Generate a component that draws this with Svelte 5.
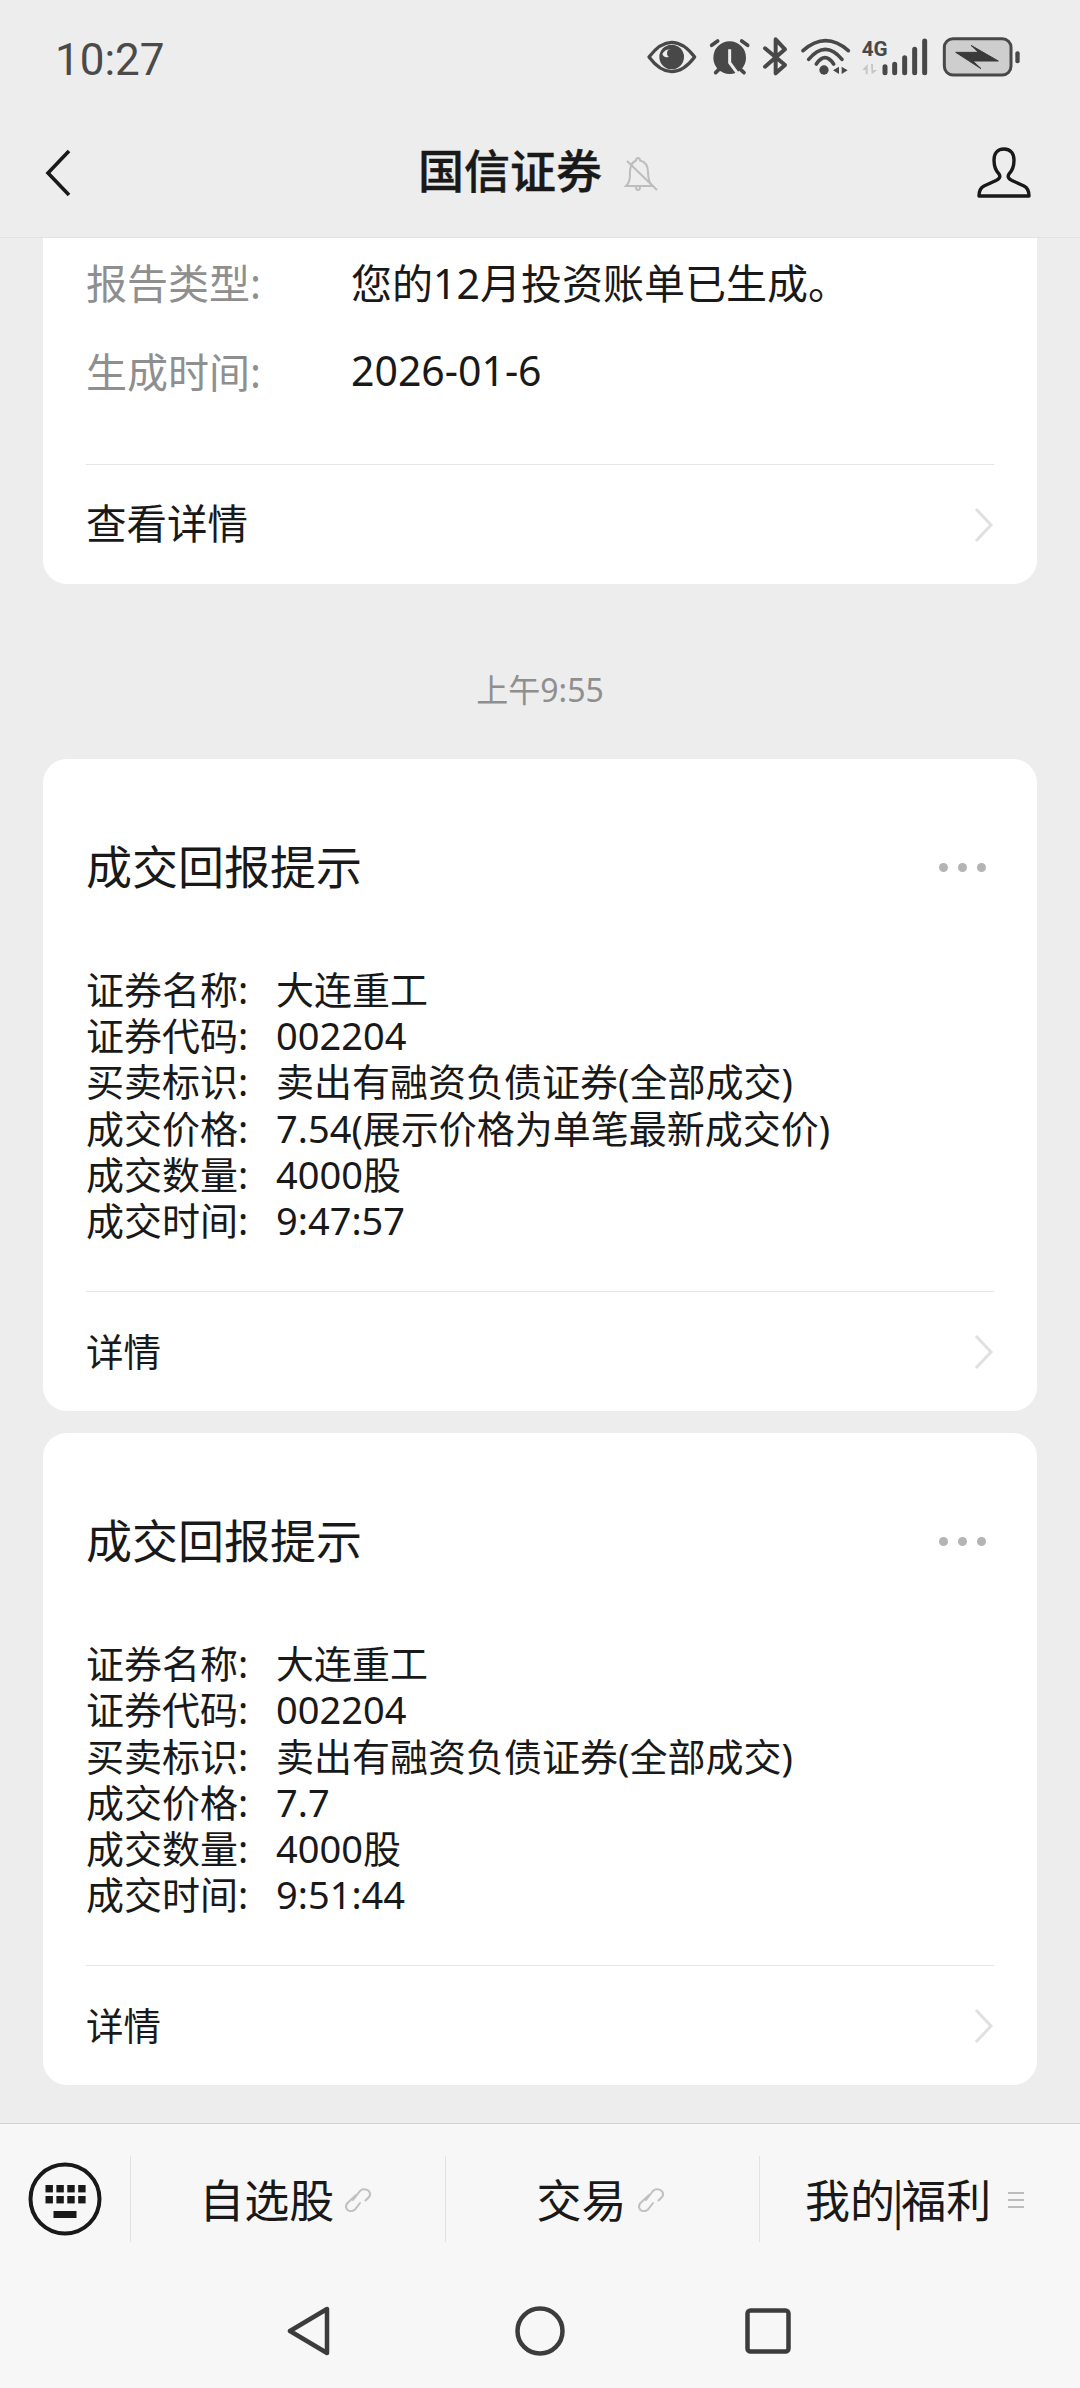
<script>
  const cards = [
    {
      rows: [
        ['证券名称', '大连重工'],
        ['证券代码', '002204'],
        ['买卖标识', '卖出有融资负债证券(全部成交)'],
        ['成交价格', '7.54(展示价格为单笔最新成交价)'],
        ['成交数量', '4000股'],
        ['成交时间', '9:47:57']
      ]
    },
    {
      rows: [
        ['证券名称', '大连重工'],
        ['证券代码', '002204'],
        ['买卖标识', '卖出有融资负债证券(全部成交)'],
        ['成交价格', '7.7'],
        ['成交数量', '4000股'],
        ['成交时间', '9:51:44']
      ]
    }
  ];
</script>

{#snippet chevron()}
  <svg class="chevron" width="20" height="36" viewBox="0 0 20 36">
    <path d="M2 2 L17 18 L2 34" fill="none" stroke="#e0e0e0" stroke-width="3" />
  </svg>
{/snippet}

{#snippet link()}
  <svg class="tab-icon" width="26" height="24" viewBox="0 0 26 24" fill="none" stroke="#c0c0c0" stroke-width="2" stroke-linecap="round">
    <path d="M8 12 L15 3 C17 0.8 21 0.8 23.5 2.8 C25.5 4.8 25.5 7 24 9 L20.5 12.5" />
    <path d="M11 7 L2.5 15 C0.8 17 0.8 20 2.5 22 C5 23.6 8 23.3 10 21.5 L15 15" />
  </svg>
{/snippet}

<div class="phone">
  <header class="top">
    <div class="status">
      <span class="time">10:27</span>
      <svg class="status-icons" width="480" height="100" viewBox="0 0 1440 300">
        <g fill="none" stroke="#484848" stroke-width="10" stroke-linecap="round" stroke-linejoin="round">
          <!-- eye -->
          <path d="M150 141 C175 108 196 97 218 97 C240 97 262 108 287 141 C262 174 240 185 218 185 C196 185 175 174 150 141 Z" />
          <!-- alarm ears and feet -->
          <path d="M338 106 L356 93 M446 106 L428 93 M350 188 L362 176 M435 188 L422 176" stroke-width="11" />
          <!-- bluetooth -->
          <path d="M498 115 L558 165 L530 190 V88 L558 118 L498 170" stroke-width="12" />
          <!-- wifi -->
          <path d="M612 122 Q680 62 748 122 M629 148 Q679 88 729 148 M652 162 Q678 124 704 162" stroke-width="11" />
          <!-- signal -->
          <path d="M858 170 V188 M887 163 V188 M917 143 V188 M947 118 V188 M977 93 V188" stroke-width="15" />
        </g>
        <circle cx="218" cy="141" r="37" fill="#484848" />
        <path d="M190 132 C196 147 214 146 222 122 C208 114 196 120 190 132 Z" fill="#ededed" />
        <circle cx="216" cy="130" r="12" fill="#484848" />
        <circle cx="392" cy="143" r="49" fill="#484848" />
        <path d="M392 118 V158 L414 188" fill="none" stroke="#ededed" stroke-width="9" />
        <circle cx="675" cy="180" r="14" fill="#484848" />
        <path d="M702 181 L720 170 V192 Z M728 170 L746 181 L728 192 Z" fill="#484848" />
        <text x="788" y="137" class="net">4G</text>
        <path d="M790 180 L806 162 V193 H800 V180 Z M816 162 H822 V180 H835 L818 193 Z" fill="#c6c6c6" />
        <!-- battery -->
        <rect x="1036" y="86" width="200" height="109" rx="26" fill="#cecece" stroke="#484848" stroke-width="9" />
        <rect x="1249" y="124" width="13" height="36" rx="6" fill="#484848" />
        <path d="M1070 127 H1138 L1116 106 L1198 153 H1122 L1146 176 Z" fill="#3a3a3a" stroke="#3a3a3a" stroke-width="3" stroke-linejoin="round" />
      </svg>
    </div>
    <nav class="bar">
      <svg class="back" width="26" height="48" viewBox="0 0 26 48">
        <path d="M24 2 L3 24 L24 46" fill="none" stroke="#191919" stroke-width="3.6" />
      </svg>
      <div class="name">
        <span>国信证券</span>
        <svg width="34" height="38" viewBox="0 0 34 38" fill="none" stroke="#bdbdbd" stroke-width="2">
          <path d="M2 32 C6 28 6 24 6 18 C6 11 9 8 12 6.5 C12 3 16 3 16 6.5 C22 8 24 12 24 18 C24 24 25 28 28 32 Z" />
          <path d="M12 33 C12 37 16 37 16 33" />
          <path d="M3 7 L33 36" />
        </svg>
      </div>
      <svg class="person" width="54" height="52" viewBox="0 0 54 52">
        <path d="M27 2 C20 2 17 7 17 13 C17 20 19 24 22 27 C24 30 22 32 19 33.5 L7 39 C3 41 2 44 2 49 H52 C52 44 51 41 47 39 L35 33.5 C32 32 30 30 32 27 C35 24 37 20 37 13 C37 7 34 2 27 2 Z" fill="none" stroke="#191919" stroke-width="3.4" stroke-linejoin="round" />
      </svg>
    </nav>
  </header>

  <main class="feed">
    <section class="card">
      <div class="report">
        <div class="report-row"><span class="report-key">报告类型:</span><span>您的12月投资账单已生成。</span></div>
        <div class="report-row"><span class="report-key">生成时间:</span><span>2026-01-6</span></div>
      </div>
      <div class="foot big">
        <span>查看详情</span>
        {@render chevron()}
      </div>
    </section>

    <div class="stamp">上午9:55</div>

    {#each cards as card}
      <section class="card trade">
        <div class="trade-title">
          <h2>成交回报提示</h2>
          <div class="dots"><i></i><i></i><i></i></div>
        </div>
        <div class="lines">
          {#each card.rows as [key, value]}
            <div class="line"><span class="line-key">{key}:</span><span>{value}</span></div>
          {/each}
        </div>
        <div class="foot">
          <span>详情</span>
          {@render chevron()}
        </div>
      </section>
    {/each}
  </main>

  <footer class="bottom">
    <div class="tabs">
      <div class="kbd">
        <svg width="74" height="74" viewBox="0 0 74 74">
          <circle cx="37" cy="37" r="34.5" fill="none" stroke="#191919" stroke-width="4" />
          <g fill="#191919">
            {#each [0, 1, 2, 3] as col}
              <rect x={17.5 + col * 10.9} y="23" width="7.4" height="7.4" />
              <rect x={17.5 + col * 10.9} y="34" width="7.4" height="7.4" />
            {/each}
            <rect x="25.5" y="49" width="23" height="7" />
          </g>
        </svg>
      </div>
      <div class="tab">自选股{@render link()}</div>
      <div class="tab">交易{@render link()}</div>
      <div class="tab"><span>我的<span class="pipe">|</span>福利</span><span class="menu"><i></i><i></i><i></i></span></div>
    </div>
    <div class="sysnav">
      <svg width="44" height="50" viewBox="0 0 44 50">
        <path d="M40 3 V47 L3 25 Z" fill="none" stroke="#3c3c3c" stroke-width="4.5" stroke-linejoin="round" />
      </svg>
      <svg width="50" height="50" viewBox="0 0 50 50">
        <circle cx="25" cy="25" r="22.5" fill="none" stroke="#3c3c3c" stroke-width="4.5" />
      </svg>
      <svg width="46" height="46" viewBox="0 0 46 46">
        <rect x="2.5" y="2.5" width="41" height="41" rx="3" fill="none" stroke="#3c3c3c" stroke-width="4.5" />
      </svg>
    </div>
  </footer>
</div>

<style>
  :global(body) {
    margin: 0;
    background: #ededed;
  }

  .phone {
    width: 1080px;
    height: 2388px;
    display: flex;
    flex-direction: column;
    overflow: hidden;
    background: #ededed;
    color: #191919;
    font-family: "Noto Sans", "Noto Sans CJK SC", sans-serif;
  }

  .top {
    flex: none;
    height: 238px;
  }

  .status {
    height: 116px;
    display: flex;
    align-items: center;
    justify-content: space-between;
    padding-left: 55px;
  }

  .time {
    font-family: Roboto, sans-serif;
    font-size: 44px;
    color: #4a4a4a;
    padding-top: 3px;
  }

  .net {
    font-family: Roboto, sans-serif;
    font-size: 62px;
    font-weight: 700;
    fill: #484848;
  }

  .status-icons {
    margin-top: 3px;
    margin-right: 1px;
  }

  .bar {
    height: 122px;
    display: flex;
    align-items: center;
    justify-content: space-between;
    padding: 0 49px 8px 45px;
    box-sizing: border-box;
    border-bottom: 1px solid #e2e2e2;
  }

  .name {
    display: flex;
    align-items: center;
    gap: 22px;
    font-size: 46px;
    font-weight: 500;
    margin-left: 28px;
    -webkit-text-stroke: 0.4px #191919;
  }

  .name span {
    padding-bottom: 9px;
  }

  .feed {
    flex: 1;
    min-height: 0;
    padding: 0 43px;
    overflow: hidden;
  }

  .card {
    background: #fff;
    border-radius: 24px;
    padding: 0 43px;
  }

  .card:first-child {
    border-radius: 0 0 24px 24px;
  }

  .report {
    padding: 1px 0 47px;
  }

  .report-row {
    height: 89px;
    box-sizing: border-box;
    padding-bottom: 6px;
    display: flex;
    align-items: center;
    font-size: 41px;
  }

  .report-key {
    width: 265px;
    color: #8f8f8f;
  }

  .foot {
    height: 119px;
    border-top: 1px solid #e5e5e5;
    display: flex;
    align-items: center;
    justify-content: space-between;
    font-size: 37.5px;
  }

  .foot span {
    padding-bottom: 4px;
  }

  .foot.big {
    font-size: 40.5px;
  }

  .foot.big span {
    padding-bottom: 6px;
  }

  .stamp {
    height: 175px;
    padding-top: 85px;
    box-sizing: border-box;
    text-align: center;
    font-size: 32px;
    line-height: 42px;
    color: #8f8f8f;
  }

  .trade {
    padding-top: 78px;
    margin-bottom: 22px;
  }

  .trade-title {
    height: 60px;
    display: flex;
    align-items: center;
    justify-content: space-between;
    margin-bottom: 69px;
  }

  h2 {
    margin: 0;
    padding-bottom: 6px;
    font-size: 46px;
    font-weight: 400;
  }

  .dots {
    display: flex;
    gap: 10px;
    margin-right: 8px;
  }

  .dots i {
    width: 9px;
    height: 9px;
    border-radius: 50%;
    background: #b4b4b4;
  }

  .lines {
    margin-bottom: 48px;
  }

  .line {
    display: flex;
    height: 46.2px;
    line-height: 46.2px;
    font-size: 38px;
    white-space: nowrap;
  }

  .line-key {
    width: 190px;
  }

  .bottom {
    flex: none;
    height: 265px;
    background: #f7f7f7;
    border-top: 1px solid #d2d2d2;
    box-sizing: border-box;
  }

  .tabs {
    height: 86px;
    margin-top: 32px;
    display: flex;
  }

  .kbd {
    width: 130px;
    padding-left: 28px;
    box-sizing: border-box;
    display: flex;
    align-items: center;
  }

  .tab {
    flex: 1;
    display: flex;
    align-items: center;
    justify-content: center;
    gap: 11px;
    padding-right: 5px;
    border-left: 1px solid #e2e2e2;
    font-family: "Noto Sans CJK SC", sans-serif;
    font-size: 45px;
    line-height: 60px;
    white-space: nowrap;
  }

  .tab:last-child {
    gap: 17px;
    padding-right: 11px;
  }

  .pipe {
    margin: 0 -3px;
  }

  .tab-icon {
    margin-top: 2px;
  }

  .menu {
    display: flex;
    flex-direction: column;
    gap: 5px;
    width: 16px;
    margin-top: 2px;
  }

  .menu i {
    height: 2px;
    background: #bcbcbc;
  }

  .sysnav {
    padding-top: 64px;
    padding-left: 287px;
    display: flex;
    align-items: center;
  }

  .sysnav svg:nth-child(2) {
    margin-left: 184px;
  }

  .sysnav svg:nth-child(3) {
    margin-left: 180px;
  }
</style>
